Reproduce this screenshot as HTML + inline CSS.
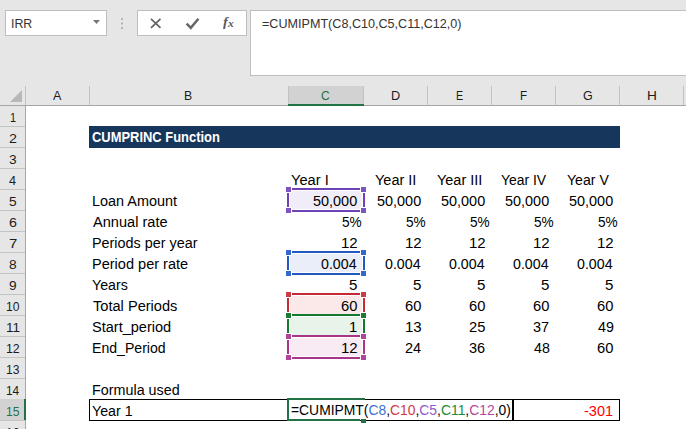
<!DOCTYPE html>
<html><head><meta charset="utf-8"><title>CUMPRINC Function</title>
<style>
html,body{margin:0;padding:0;}
body{width:686px;height:429px;overflow:hidden;background:#e6e6e6;position:relative;font-family:"Liberation Sans",sans-serif;font-size:14px;color:#000;}
.a{position:absolute;}
.t{position:absolute;white-space:nowrap;line-height:21px;height:21px;transform-origin:0 0;}
.t i{font-style:normal;}
.box{position:absolute;background:#fff;border:1px solid #bebebe;box-sizing:border-box;}
</style></head><body>

<div class="box" style="left:5px;top:10px;width:102px;height:26px;"></div>
<svg class="a" style="left:92px;top:19px" width="9" height="6" viewBox="0 0 9 6"><path d="M1 1h7L4.5 5z" fill="#777"/></svg>
<div class="a" style="left:121px;top:18px;width:2px;height:2px;background:#b4b4b4;box-shadow:0 4.5px 0 #b4b4b4,0 9px 0 #b4b4b4;"></div>
<div class="box" style="left:137px;top:10px;width:110px;height:26px;"></div>
<svg class="a" style="left:149px;top:17px" width="14" height="12" viewBox="0 0 14 12"><path d="M2 1.8l9.5 9M11.5 1.8l-9.5 9" stroke="#666" stroke-width="1.8" fill="none"/></svg>
<svg class="a" style="left:185px;top:16.6px" width="16" height="13" viewBox="0 0 16 13"><path d="M1.6 6.6L5.8 10.8L13.4 1.8" stroke="#666" stroke-width="2.5" fill="none"/></svg>
<div class="a" style="left:222.5px;top:10.6px;line-height:21px;font-family:'Liberation Serif',serif;font-style:italic;font-weight:bold;font-size:13px;color:#5a5a5a;transform:scaleX(1.12);transform-origin:0 0;">f</div>
<div class="a" style="left:228px;top:13.2px;line-height:21px;font-family:'Liberation Serif',serif;font-style:italic;font-weight:bold;font-size:10px;color:#5a5a5a;transform:scaleX(1.15);transform-origin:0 0;">x</div>
<div class="box" style="left:250px;top:10px;width:440px;height:66px;"></div>
<div class="a" style="left:26px;top:106px;width:660px;height:323px;background:#fff;"></div>
<div class="a" style="left:0;top:105px;width:686px;height:1px;background:#a6a6a6;"></div>
<div class="a" style="left:25px;top:105px;width:1px;height:324px;background:#a6a6a6;"></div>
<svg class="a" style="left:10px;top:90px" width="12" height="12" viewBox="0 0 12 12"><path d="M12 0v12H0z" fill="#b8b8b8"/></svg>
<div class="a" style="left:288px;top:86px;width:76px;height:18px;background:#d2d2d2;border-bottom:2px solid #217346;"></div>
<div class="a" style="left:25px;top:86px;width:1px;height:19px;background:#c2c2c2;"></div>
<div class="a" style="left:89px;top:86px;width:1px;height:19px;background:#c2c2c2;"></div>
<div class="a" style="left:288px;top:86px;width:1px;height:17px;background:#c2c2c2;"></div>
<div class="a" style="left:363px;top:86px;width:1px;height:17px;background:#c2c2c2;"></div>
<div class="a" style="left:427px;top:86px;width:1px;height:19px;background:#c2c2c2;"></div>
<div class="a" style="left:491px;top:86px;width:1px;height:19px;background:#c2c2c2;"></div>
<div class="a" style="left:555px;top:86px;width:1px;height:19px;background:#c2c2c2;"></div>
<div class="a" style="left:619px;top:86px;width:1px;height:19px;background:#c2c2c2;"></div>
<div class="a" style="left:683px;top:86px;width:1px;height:19px;background:#c2c2c2;"></div>
<div class="a" style="left:0;top:126px;width:25px;height:1px;background:#c4c4c4;"></div>
<div class="a" style="left:0;top:147px;width:25px;height:1px;background:#c4c4c4;"></div>
<div class="a" style="left:0;top:168px;width:25px;height:1px;background:#c4c4c4;"></div>
<div class="a" style="left:0;top:189px;width:25px;height:1px;background:#c4c4c4;"></div>
<div class="a" style="left:0;top:210px;width:25px;height:1px;background:#c4c4c4;"></div>
<div class="a" style="left:0;top:231px;width:25px;height:1px;background:#c4c4c4;"></div>
<div class="a" style="left:0;top:252px;width:25px;height:1px;background:#c4c4c4;"></div>
<div class="a" style="left:0;top:273px;width:25px;height:1px;background:#c4c4c4;"></div>
<div class="a" style="left:0;top:294px;width:25px;height:1px;background:#c4c4c4;"></div>
<div class="a" style="left:0;top:315px;width:25px;height:1px;background:#c4c4c4;"></div>
<div class="a" style="left:0;top:336px;width:25px;height:1px;background:#c4c4c4;"></div>
<div class="a" style="left:0;top:357px;width:25px;height:1px;background:#c4c4c4;"></div>
<div class="a" style="left:0;top:378px;width:25px;height:1px;background:#c4c4c4;"></div>
<div class="a" style="left:0;top:399px;width:25px;height:1px;background:#c4c4c4;"></div>
<div class="a" style="left:0;top:399px;width:24px;height:21px;background:#d2d2d2;border-right:2px solid #217346;"></div>
<div class="a" style="left:0;top:420px;width:25px;height:1px;background:#c4c4c4;"></div>
<div class="a" style="left:0;top:441px;width:25px;height:1px;background:#c4c4c4;"></div>
<div class="a" style="left:89px;top:126px;width:531px;height:22px;background:#16365c;"></div>
<div class="a" style="left:290px;top:191px;width:72px;height:18px;background:#f1edf8;"></div>
<div class="a" style="left:290px;top:254px;width:72px;height:18px;background:#e9eef9;"></div>
<div class="a" style="left:290px;top:296px;width:72px;height:18px;background:#fbe9ea;"></div>
<div class="a" style="left:290px;top:317px;width:72px;height:18px;background:#e8f3ea;"></div>
<div class="a" style="left:290px;top:338px;width:72px;height:18px;background:#f8ebf4;"></div>
<div class="a" style="left:292px;top:188px;width:68px;height:2px;background:#6f42b5;"></div>
<div class="a" style="left:292px;top:210px;width:68px;height:2px;background:#6f42b5;"></div>
<div class="a" style="left:287px;top:193px;width:2px;height:14px;background:#6f42b5;"></div>
<div class="a" style="left:363px;top:193px;width:2px;height:14px;background:#6f42b5;"></div>
<div class="a" style="left:292px;top:251px;width:68px;height:2px;background:#2258c2;"></div>
<div class="a" style="left:292px;top:273px;width:68px;height:2px;background:#2258c2;"></div>
<div class="a" style="left:287px;top:256px;width:2px;height:14px;background:#2258c2;"></div>
<div class="a" style="left:363px;top:256px;width:2px;height:14px;background:#2258c2;"></div>
<div class="a" style="left:292px;top:293px;width:68px;height:2px;background:#c52a34;"></div>
<div class="a" style="left:287px;top:298px;width:2px;height:14px;background:#c52a34;"></div>
<div class="a" style="left:363px;top:298px;width:2px;height:14px;background:#c52a34;"></div>
<div class="a" style="left:292px;top:314px;width:68px;height:2px;background:#127a2c;"></div>
<div class="a" style="left:287px;top:319px;width:2px;height:14px;background:#127a2c;"></div>
<div class="a" style="left:363px;top:319px;width:2px;height:14px;background:#127a2c;"></div>
<div class="a" style="left:292px;top:335px;width:68px;height:2px;background:#a8358a;"></div>
<div class="a" style="left:292px;top:357px;width:68px;height:2px;background:#a8358a;"></div>
<div class="a" style="left:287px;top:340px;width:2px;height:14px;background:#a8358a;"></div>
<div class="a" style="left:363px;top:340px;width:2px;height:14px;background:#a8358a;"></div>
<div class="a" style="left:286px;top:187px;width:5px;height:5px;background:#7d55c0;outline:1px solid #fff;"></div>
<div class="a" style="left:286px;top:208px;width:5px;height:5px;background:#7d55c0;outline:1px solid #fff;"></div>
<div class="a" style="left:361px;top:187px;width:5px;height:5px;background:#7d55c0;outline:1px solid #fff;"></div>
<div class="a" style="left:361px;top:208px;width:5px;height:5px;background:#7d55c0;outline:1px solid #fff;"></div>
<div class="a" style="left:286px;top:250px;width:5px;height:5px;background:#3468cf;outline:1px solid #fff;"></div>
<div class="a" style="left:286px;top:271px;width:5px;height:5px;background:#3468cf;outline:1px solid #fff;"></div>
<div class="a" style="left:361px;top:250px;width:5px;height:5px;background:#3468cf;outline:1px solid #fff;"></div>
<div class="a" style="left:361px;top:271px;width:5px;height:5px;background:#3468cf;outline:1px solid #fff;"></div>
<div class="a" style="left:286px;top:292px;width:5px;height:5px;background:#cc3a44;outline:1px solid #fff;"></div>
<div class="a" style="left:286px;top:313px;width:5px;height:5px;background:#cc3a44;outline:1px solid #fff;"></div>
<div class="a" style="left:361px;top:292px;width:5px;height:5px;background:#cc3a44;outline:1px solid #fff;"></div>
<div class="a" style="left:361px;top:313px;width:5px;height:5px;background:#cc3a44;outline:1px solid #fff;"></div>
<div class="a" style="left:286px;top:313px;width:5px;height:5px;background:#1e7b34;outline:1px solid #fff;"></div>
<div class="a" style="left:286px;top:334px;width:5px;height:5px;background:#1e7b34;outline:1px solid #fff;"></div>
<div class="a" style="left:361px;top:313px;width:5px;height:5px;background:#1e7b34;outline:1px solid #fff;"></div>
<div class="a" style="left:361px;top:334px;width:5px;height:5px;background:#1e7b34;outline:1px solid #fff;"></div>
<div class="a" style="left:286px;top:334px;width:5px;height:5px;background:#b0459a;outline:1px solid #fff;"></div>
<div class="a" style="left:286px;top:355px;width:5px;height:5px;background:#b0459a;outline:1px solid #fff;"></div>
<div class="a" style="left:361px;top:334px;width:5px;height:5px;background:#b0459a;outline:1px solid #fff;"></div>
<div class="a" style="left:361px;top:355px;width:5px;height:5px;background:#b0459a;outline:1px solid #fff;"></div>
<div class="a" style="left:89px;top:399px;width:531px;height:22px;border:1px solid #000;box-sizing:border-box;"></div>
<div class="a" style="left:512px;top:399px;width:2px;height:22px;background:#000;"></div>
<div class="a" style="left:287px;top:398px;width:78px;height:2px;background:#217346;"></div>
<div class="a" style="left:287px;top:398px;width:2px;height:23px;background:#217346;"></div>
<div class="a" style="left:287px;top:419px;width:73px;height:2px;background:#217346;"></div>
<div class="a" style="left:361px;top:419px;width:5px;height:4px;background:#217346;"></div>
<div class="t" style="left:11.11px;top:13.00px;transform:scaleX(0.9512);font-size:13px;color:#333;">IRR</div>
<div class="t" style="left:262.02px;top:13.20px;transform:scaleX(0.9685);font-size:13px;color:#333;">=CUMIPMT(C8,C10,C5,C11,C12,0)</div>
<div class="t" style="left:52.60px;top:85.00px;transform:scaleX(0.9647);font-size:13px;color:#1c1c1c;">A</div>
<div class="t" style="left:183.96px;top:85.00px;transform:scaleX(0.9429);font-size:13px;color:#1c1c1c;">B</div>
<div class="t" style="left:321.31px;top:85.00px;transform:scaleX(0.9250);font-size:13px;color:#217346;">C</div>
<div class="t" style="left:390.92px;top:85.00px;transform:scaleX(0.9806);font-size:13px;color:#1c1c1c;">D</div>
<div class="t" style="left:455.87px;top:85.00px;transform:scaleX(0.8276);font-size:13px;color:#1c1c1c;">E</div>
<div class="t" style="left:519.91px;top:85.00px;transform:scaleX(0.8923);font-size:13px;color:#1c1c1c;">F</div>
<div class="t" style="left:582.88px;top:85.00px;transform:scaleX(0.9647);font-size:13px;color:#1c1c1c;">G</div>
<div class="t" style="left:646.85px;top:85.00px;transform:scaleX(1.0483);font-size:13px;color:#1c1c1c;">H</div>
<div class="t" style="left:9.66px;top:106.70px;transform:scaleX(0.8364);font-size:13px;color:#1c1c1c;">1</div>
<div class="t" style="left:8.95px;top:127.70px;transform:scaleX(1.1000);font-size:13px;color:#1c1c1c;">2</div>
<div class="t" style="left:8.97px;top:148.70px;transform:scaleX(1.0560);font-size:13px;color:#1c1c1c;">3</div>
<div class="t" style="left:9.26px;top:169.70px;transform:scaleX(0.9778);font-size:13px;color:#1c1c1c;">4</div>
<div class="t" style="left:8.97px;top:190.70px;transform:scaleX(1.0560);font-size:13px;color:#1c1c1c;">5</div>
<div class="t" style="left:8.68px;top:211.70px;transform:scaleX(1.1000);font-size:13px;color:#1c1c1c;">6</div>
<div class="t" style="left:8.64px;top:232.70px;transform:scaleX(1.1478);font-size:13px;color:#1c1c1c;">7</div>
<div class="t" style="left:8.97px;top:253.70px;transform:scaleX(1.0560);font-size:13px;color:#1c1c1c;">8</div>
<div class="t" style="left:8.97px;top:274.70px;transform:scaleX(1.0560);font-size:13px;color:#1c1c1c;">9</div>
<div class="t" style="left:5.82px;top:295.70px;transform:scaleX(0.9308);font-size:13px;color:#1c1c1c;">10</div>
<div class="t" style="left:5.72px;top:316.70px;transform:scaleX(1.0298);font-size:13px;color:#1c1c1c;">11</div>
<div class="t" style="left:5.80px;top:337.70px;transform:scaleX(0.9490);font-size:13px;color:#1c1c1c;">12</div>
<div class="t" style="left:5.82px;top:358.70px;transform:scaleX(0.9308);font-size:13px;color:#1c1c1c;">13</div>
<div class="t" style="left:5.84px;top:379.70px;transform:scaleX(0.9132);font-size:13px;color:#1c1c1c;">14</div>
<div class="t" style="left:5.82px;top:400.70px;transform:scaleX(0.9308);font-size:13px;color:#217346;">15</div>
<div class="t" style="left:5.82px;top:421.70px;transform:scaleX(0.9308);font-size:13px;color:#1c1c1c;">16</div>
<div class="t" style="left:92.34px;top:127.15px;transform:scaleX(0.9234);font-size:14px;color:#fff;font-weight:bold;">CUMPRINC Function</div>
<div class="t" style="left:91.77px;top:190.65px;transform:scaleX(1.0307);font-size:14px;">Loan Amount</div>
<div class="t" style="left:92.80px;top:211.65px;transform:scaleX(1.0408);font-size:14px;">Annual rate</div>
<div class="t" style="left:91.77px;top:232.65px;transform:scaleX(1.0266);font-size:14px;">Periods per year</div>
<div class="t" style="left:91.76px;top:253.65px;transform:scaleX(1.0385);font-size:14px;">Period per rate</div>
<div class="t" style="left:92.29px;top:274.65px;transform:scaleX(1.0131);font-size:14px;">Years</div>
<div class="t" style="left:92.54px;top:295.65px;transform:scaleX(1.0430);font-size:14px;">Total Periods</div>
<div class="t" style="left:92.02px;top:316.65px;transform:scaleX(1.0381);font-size:14px;">Start_period</div>
<div class="t" style="left:91.89px;top:337.65px;transform:scaleX(1.0063);font-size:14px;">End_Period</div>
<div class="t" style="left:91.78px;top:379.65px;transform:scaleX(1.0245);font-size:14px;">Formula used</div>
<div class="t" style="left:92.29px;top:400.65px;transform:scaleX(1.0168);font-size:14px;">Year 1</div>
<div class="t" style="left:290.88px;top:169.65px;transform:scaleX(1.0453);font-size:14px;">Year I</div>
<div class="t" style="left:375.08px;top:169.65px;transform:scaleX(1.0353);font-size:14px;">Year II</div>
<div class="t" style="left:437.38px;top:169.65px;transform:scaleX(1.0333);font-size:14px;">Year III</div>
<div class="t" style="left:501.10px;top:169.65px;transform:scaleX(0.9944);font-size:14px;">Year IV</div>
<div class="t" style="left:566.60px;top:169.65px;transform:scaleX(1.0073);font-size:14px;">Year V</div>
<div class="t" style="left:313.23px;top:190.65px;transform:scaleX(1.0313);font-size:14px;">50,000</div>
<div class="t" style="left:377.23px;top:190.65px;transform:scaleX(1.0313);font-size:14px;">50,000</div>
<div class="t" style="left:441.23px;top:190.65px;transform:scaleX(1.0313);font-size:14px;">50,000</div>
<div class="t" style="left:505.23px;top:190.65px;transform:scaleX(1.0313);font-size:14px;">50,000</div>
<div class="t" style="left:569.23px;top:190.65px;transform:scaleX(1.0313);font-size:14px;">50,000</div>
<div class="t" style="left:341.77px;top:211.65px;transform:scaleX(0.9737);font-size:14px;">5%</div>
<div class="t" style="left:405.77px;top:211.65px;transform:scaleX(0.9737);font-size:14px;">5%</div>
<div class="t" style="left:469.77px;top:211.65px;transform:scaleX(0.9737);font-size:14px;">5%</div>
<div class="t" style="left:533.77px;top:211.65px;transform:scaleX(0.9737);font-size:14px;">5%</div>
<div class="t" style="left:597.77px;top:211.65px;transform:scaleX(0.9737);font-size:14px;">5%</div>
<div class="t" style="left:340.73px;top:232.65px;transform:scaleX(1.0714);font-size:14px;">12</div>
<div class="t" style="left:404.73px;top:232.65px;transform:scaleX(1.0714);font-size:14px;">12</div>
<div class="t" style="left:468.73px;top:232.65px;transform:scaleX(1.0714);font-size:14px;">12</div>
<div class="t" style="left:532.73px;top:232.65px;transform:scaleX(1.0714);font-size:14px;">12</div>
<div class="t" style="left:596.73px;top:232.65px;transform:scaleX(1.0714);font-size:14px;">12</div>
<div class="t" style="left:321.49px;top:253.65px;transform:scaleX(1.0161);font-size:14px;">0.004</div>
<div class="t" style="left:385.49px;top:253.65px;transform:scaleX(1.0161);font-size:14px;">0.004</div>
<div class="t" style="left:449.49px;top:253.65px;transform:scaleX(1.0161);font-size:14px;">0.004</div>
<div class="t" style="left:513.49px;top:253.65px;transform:scaleX(1.0161);font-size:14px;">0.004</div>
<div class="t" style="left:577.49px;top:253.65px;transform:scaleX(1.0161);font-size:14px;">0.004</div>
<div class="t" style="left:348.99px;top:274.65px;transform:scaleX(1.0769);font-size:14px;">5</div>
<div class="t" style="left:412.99px;top:274.65px;transform:scaleX(1.0769);font-size:14px;">5</div>
<div class="t" style="left:476.99px;top:274.65px;transform:scaleX(1.0769);font-size:14px;">5</div>
<div class="t" style="left:540.99px;top:274.65px;transform:scaleX(1.0769);font-size:14px;">5</div>
<div class="t" style="left:604.99px;top:274.65px;transform:scaleX(1.0769);font-size:14px;">5</div>
<div class="t" style="left:341.01px;top:295.65px;transform:scaleX(1.0526);font-size:14px;">60</div>
<div class="t" style="left:405.01px;top:295.65px;transform:scaleX(1.0526);font-size:14px;">60</div>
<div class="t" style="left:469.01px;top:295.65px;transform:scaleX(1.0526);font-size:14px;">60</div>
<div class="t" style="left:533.01px;top:295.65px;transform:scaleX(1.0526);font-size:14px;">60</div>
<div class="t" style="left:597.01px;top:295.65px;transform:scaleX(1.0526);font-size:14px;">60</div>
<div class="t" style="left:349.14px;top:316.65px;transform:scaleX(1.0560);font-size:14px;">1</div>
<div class="t" style="left:404.73px;top:316.65px;transform:scaleX(1.0714);font-size:14px;">13</div>
<div class="t" style="left:469.01px;top:316.65px;transform:scaleX(1.0526);font-size:14px;">25</div>
<div class="t" style="left:533.28px;top:316.65px;transform:scaleX(1.0345);font-size:14px;">37</div>
<div class="t" style="left:597.55px;top:316.65px;transform:scaleX(1.0169);font-size:14px;">49</div>
<div class="t" style="left:340.73px;top:337.65px;transform:scaleX(1.0714);font-size:14px;">12</div>
<div class="t" style="left:405.02px;top:337.65px;transform:scaleX(1.0345);font-size:14px;">24</div>
<div class="t" style="left:469.28px;top:337.65px;transform:scaleX(1.0345);font-size:14px;">36</div>
<div class="t" style="left:533.55px;top:337.65px;transform:scaleX(1.0169);font-size:14px;">48</div>
<div class="t" style="left:597.01px;top:337.65px;transform:scaleX(1.0526);font-size:14px;">60</div>
<div class="t" style="left:583.58px;top:400.65px;transform:scaleX(1.0370);font-size:14px;color:#f00;">-301</div>
<div class="t" style="left:290.66px;top:400.35px;transform:scaleX(0.9907);font-size:14px;">=CUMIPMT(<i style="color:#3b6fd0">C8</i>,<i style="color:#d03a3f">C10</i>,<i style="color:#8e5bcf">C5</i>,<i style="color:#1d8a3a">C11</i>,<i style="color:#b5479b">C12</i>,0)</div>
</body></html>
